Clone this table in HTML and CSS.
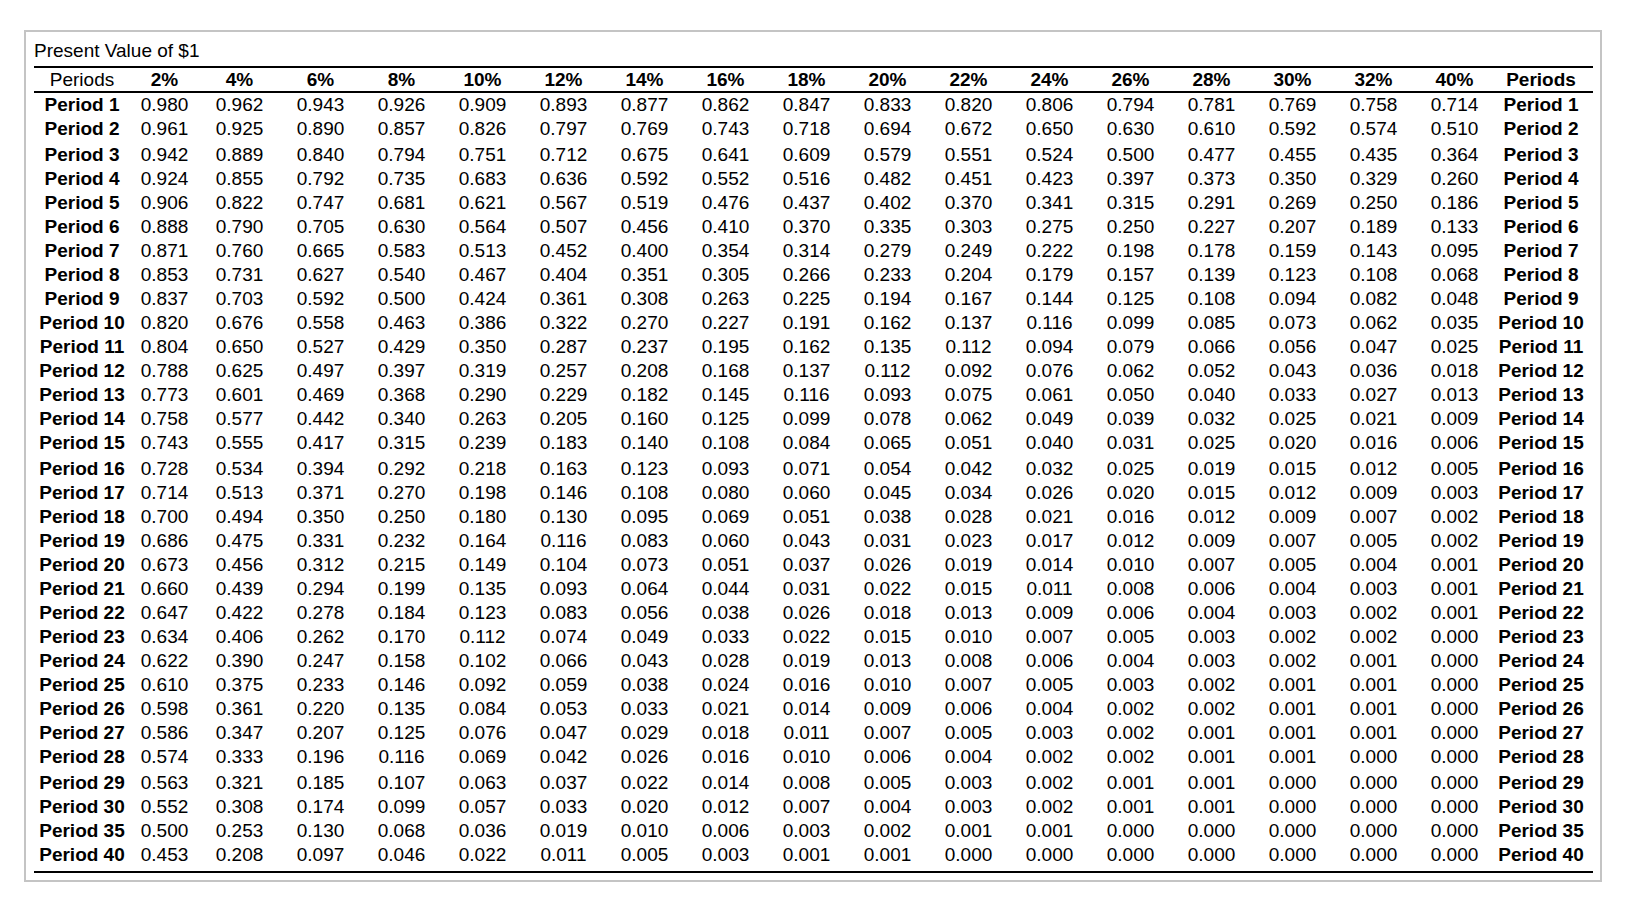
FILE: index.html
```html
<!DOCTYPE html>
<html lang="en">
<head>
<meta charset="utf-8">
<title>Present Value of $1</title>
<link rel="stylesheet" href="styles.css">
</head>
<body>
<div class="frame">
  <div class="title">Present Value of $1</div>
  <div class="table-wrap">
    <table class="pv">
      <colgroup>
        <col class="c-label-l">
        <col class="c-first">
        <col class="c-num"><col class="c-num"><col class="c-num"><col class="c-num">
        <col class="c-num"><col class="c-num"><col class="c-num"><col class="c-num">
        <col class="c-num"><col class="c-num"><col class="c-num"><col class="c-num">
        <col class="c-num"><col class="c-num"><col class="c-num"><col class="c-num">
        <col class="c-label-r">
      </colgroup>
      <thead>
        <tr>
          <th class="plain">Periods</th>
          <th>2%</th><th>4%</th><th>6%</th><th>8%</th><th>10%</th><th>12%</th><th>14%</th><th>16%</th><th>18%</th><th>20%</th><th>22%</th><th>24%</th><th>26%</th><th>28%</th><th>30%</th><th>32%</th><th>40%</th>
          <th class="end">Periods</th>
        </tr>
      </thead>
      <tbody>
        <tr><th>Period 1</th><td>0.980</td><td>0.962</td><td>0.943</td><td>0.926</td><td>0.909</td><td>0.893</td><td>0.877</td><td>0.862</td><td>0.847</td><td>0.833</td><td>0.820</td><td>0.806</td><td>0.794</td><td>0.781</td><td>0.769</td><td>0.758</td><td>0.714</td><th class="end">Period 1</th></tr>
        <tr><th>Period 2</th><td>0.961</td><td>0.925</td><td>0.890</td><td>0.857</td><td>0.826</td><td>0.797</td><td>0.769</td><td>0.743</td><td>0.718</td><td>0.694</td><td>0.672</td><td>0.650</td><td>0.630</td><td>0.610</td><td>0.592</td><td>0.574</td><td>0.510</td><th class="end">Period 2</th></tr>
        <tr class="gap"><th>Period 3</th><td>0.942</td><td>0.889</td><td>0.840</td><td>0.794</td><td>0.751</td><td>0.712</td><td>0.675</td><td>0.641</td><td>0.609</td><td>0.579</td><td>0.551</td><td>0.524</td><td>0.500</td><td>0.477</td><td>0.455</td><td>0.435</td><td>0.364</td><th class="end">Period 3</th></tr>
        <tr><th>Period 4</th><td>0.924</td><td>0.855</td><td>0.792</td><td>0.735</td><td>0.683</td><td>0.636</td><td>0.592</td><td>0.552</td><td>0.516</td><td>0.482</td><td>0.451</td><td>0.423</td><td>0.397</td><td>0.373</td><td>0.350</td><td>0.329</td><td>0.260</td><th class="end">Period 4</th></tr>
        <tr><th>Period 5</th><td>0.906</td><td>0.822</td><td>0.747</td><td>0.681</td><td>0.621</td><td>0.567</td><td>0.519</td><td>0.476</td><td>0.437</td><td>0.402</td><td>0.370</td><td>0.341</td><td>0.315</td><td>0.291</td><td>0.269</td><td>0.250</td><td>0.186</td><th class="end">Period 5</th></tr>
        <tr><th>Period 6</th><td>0.888</td><td>0.790</td><td>0.705</td><td>0.630</td><td>0.564</td><td>0.507</td><td>0.456</td><td>0.410</td><td>0.370</td><td>0.335</td><td>0.303</td><td>0.275</td><td>0.250</td><td>0.227</td><td>0.207</td><td>0.189</td><td>0.133</td><th class="end">Period 6</th></tr>
        <tr><th>Period 7</th><td>0.871</td><td>0.760</td><td>0.665</td><td>0.583</td><td>0.513</td><td>0.452</td><td>0.400</td><td>0.354</td><td>0.314</td><td>0.279</td><td>0.249</td><td>0.222</td><td>0.198</td><td>0.178</td><td>0.159</td><td>0.143</td><td>0.095</td><th class="end">Period 7</th></tr>
        <tr><th>Period 8</th><td>0.853</td><td>0.731</td><td>0.627</td><td>0.540</td><td>0.467</td><td>0.404</td><td>0.351</td><td>0.305</td><td>0.266</td><td>0.233</td><td>0.204</td><td>0.179</td><td>0.157</td><td>0.139</td><td>0.123</td><td>0.108</td><td>0.068</td><th class="end">Period 8</th></tr>
        <tr><th>Period 9</th><td>0.837</td><td>0.703</td><td>0.592</td><td>0.500</td><td>0.424</td><td>0.361</td><td>0.308</td><td>0.263</td><td>0.225</td><td>0.194</td><td>0.167</td><td>0.144</td><td>0.125</td><td>0.108</td><td>0.094</td><td>0.082</td><td>0.048</td><th class="end">Period 9</th></tr>
        <tr><th>Period 10</th><td>0.820</td><td>0.676</td><td>0.558</td><td>0.463</td><td>0.386</td><td>0.322</td><td>0.270</td><td>0.227</td><td>0.191</td><td>0.162</td><td>0.137</td><td>0.116</td><td>0.099</td><td>0.085</td><td>0.073</td><td>0.062</td><td>0.035</td><th class="end">Period 10</th></tr>
        <tr><th>Period 11</th><td>0.804</td><td>0.650</td><td>0.527</td><td>0.429</td><td>0.350</td><td>0.287</td><td>0.237</td><td>0.195</td><td>0.162</td><td>0.135</td><td>0.112</td><td>0.094</td><td>0.079</td><td>0.066</td><td>0.056</td><td>0.047</td><td>0.025</td><th class="end">Period 11</th></tr>
        <tr><th>Period 12</th><td>0.788</td><td>0.625</td><td>0.497</td><td>0.397</td><td>0.319</td><td>0.257</td><td>0.208</td><td>0.168</td><td>0.137</td><td>0.112</td><td>0.092</td><td>0.076</td><td>0.062</td><td>0.052</td><td>0.043</td><td>0.036</td><td>0.018</td><th class="end">Period 12</th></tr>
        <tr><th>Period 13</th><td>0.773</td><td>0.601</td><td>0.469</td><td>0.368</td><td>0.290</td><td>0.229</td><td>0.182</td><td>0.145</td><td>0.116</td><td>0.093</td><td>0.075</td><td>0.061</td><td>0.050</td><td>0.040</td><td>0.033</td><td>0.027</td><td>0.013</td><th class="end">Period 13</th></tr>
        <tr><th>Period 14</th><td>0.758</td><td>0.577</td><td>0.442</td><td>0.340</td><td>0.263</td><td>0.205</td><td>0.160</td><td>0.125</td><td>0.099</td><td>0.078</td><td>0.062</td><td>0.049</td><td>0.039</td><td>0.032</td><td>0.025</td><td>0.021</td><td>0.009</td><th class="end">Period 14</th></tr>
        <tr><th>Period 15</th><td>0.743</td><td>0.555</td><td>0.417</td><td>0.315</td><td>0.239</td><td>0.183</td><td>0.140</td><td>0.108</td><td>0.084</td><td>0.065</td><td>0.051</td><td>0.040</td><td>0.031</td><td>0.025</td><td>0.020</td><td>0.016</td><td>0.006</td><th class="end">Period 15</th></tr>
        <tr class="gap"><th>Period 16</th><td>0.728</td><td>0.534</td><td>0.394</td><td>0.292</td><td>0.218</td><td>0.163</td><td>0.123</td><td>0.093</td><td>0.071</td><td>0.054</td><td>0.042</td><td>0.032</td><td>0.025</td><td>0.019</td><td>0.015</td><td>0.012</td><td>0.005</td><th class="end">Period 16</th></tr>
        <tr><th>Period 17</th><td>0.714</td><td>0.513</td><td>0.371</td><td>0.270</td><td>0.198</td><td>0.146</td><td>0.108</td><td>0.080</td><td>0.060</td><td>0.045</td><td>0.034</td><td>0.026</td><td>0.020</td><td>0.015</td><td>0.012</td><td>0.009</td><td>0.003</td><th class="end">Period 17</th></tr>
        <tr><th>Period 18</th><td>0.700</td><td>0.494</td><td>0.350</td><td>0.250</td><td>0.180</td><td>0.130</td><td>0.095</td><td>0.069</td><td>0.051</td><td>0.038</td><td>0.028</td><td>0.021</td><td>0.016</td><td>0.012</td><td>0.009</td><td>0.007</td><td>0.002</td><th class="end">Period 18</th></tr>
        <tr><th>Period 19</th><td>0.686</td><td>0.475</td><td>0.331</td><td>0.232</td><td>0.164</td><td>0.116</td><td>0.083</td><td>0.060</td><td>0.043</td><td>0.031</td><td>0.023</td><td>0.017</td><td>0.012</td><td>0.009</td><td>0.007</td><td>0.005</td><td>0.002</td><th class="end">Period 19</th></tr>
        <tr><th>Period 20</th><td>0.673</td><td>0.456</td><td>0.312</td><td>0.215</td><td>0.149</td><td>0.104</td><td>0.073</td><td>0.051</td><td>0.037</td><td>0.026</td><td>0.019</td><td>0.014</td><td>0.010</td><td>0.007</td><td>0.005</td><td>0.004</td><td>0.001</td><th class="end">Period 20</th></tr>
        <tr><th>Period 21</th><td>0.660</td><td>0.439</td><td>0.294</td><td>0.199</td><td>0.135</td><td>0.093</td><td>0.064</td><td>0.044</td><td>0.031</td><td>0.022</td><td>0.015</td><td>0.011</td><td>0.008</td><td>0.006</td><td>0.004</td><td>0.003</td><td>0.001</td><th class="end">Period 21</th></tr>
        <tr><th>Period 22</th><td>0.647</td><td>0.422</td><td>0.278</td><td>0.184</td><td>0.123</td><td>0.083</td><td>0.056</td><td>0.038</td><td>0.026</td><td>0.018</td><td>0.013</td><td>0.009</td><td>0.006</td><td>0.004</td><td>0.003</td><td>0.002</td><td>0.001</td><th class="end">Period 22</th></tr>
        <tr><th>Period 23</th><td>0.634</td><td>0.406</td><td>0.262</td><td>0.170</td><td>0.112</td><td>0.074</td><td>0.049</td><td>0.033</td><td>0.022</td><td>0.015</td><td>0.010</td><td>0.007</td><td>0.005</td><td>0.003</td><td>0.002</td><td>0.002</td><td>0.000</td><th class="end">Period 23</th></tr>
        <tr><th>Period 24</th><td>0.622</td><td>0.390</td><td>0.247</td><td>0.158</td><td>0.102</td><td>0.066</td><td>0.043</td><td>0.028</td><td>0.019</td><td>0.013</td><td>0.008</td><td>0.006</td><td>0.004</td><td>0.003</td><td>0.002</td><td>0.001</td><td>0.000</td><th class="end">Period 24</th></tr>
        <tr><th>Period 25</th><td>0.610</td><td>0.375</td><td>0.233</td><td>0.146</td><td>0.092</td><td>0.059</td><td>0.038</td><td>0.024</td><td>0.016</td><td>0.010</td><td>0.007</td><td>0.005</td><td>0.003</td><td>0.002</td><td>0.001</td><td>0.001</td><td>0.000</td><th class="end">Period 25</th></tr>
        <tr><th>Period 26</th><td>0.598</td><td>0.361</td><td>0.220</td><td>0.135</td><td>0.084</td><td>0.053</td><td>0.033</td><td>0.021</td><td>0.014</td><td>0.009</td><td>0.006</td><td>0.004</td><td>0.002</td><td>0.002</td><td>0.001</td><td>0.001</td><td>0.000</td><th class="end">Period 26</th></tr>
        <tr><th>Period 27</th><td>0.586</td><td>0.347</td><td>0.207</td><td>0.125</td><td>0.076</td><td>0.047</td><td>0.029</td><td>0.018</td><td>0.011</td><td>0.007</td><td>0.005</td><td>0.003</td><td>0.002</td><td>0.001</td><td>0.001</td><td>0.001</td><td>0.000</td><th class="end">Period 27</th></tr>
        <tr><th>Period 28</th><td>0.574</td><td>0.333</td><td>0.196</td><td>0.116</td><td>0.069</td><td>0.042</td><td>0.026</td><td>0.016</td><td>0.010</td><td>0.006</td><td>0.004</td><td>0.002</td><td>0.002</td><td>0.001</td><td>0.001</td><td>0.000</td><td>0.000</td><th class="end">Period 28</th></tr>
        <tr class="gap"><th>Period 29</th><td>0.563</td><td>0.321</td><td>0.185</td><td>0.107</td><td>0.063</td><td>0.037</td><td>0.022</td><td>0.014</td><td>0.008</td><td>0.005</td><td>0.003</td><td>0.002</td><td>0.001</td><td>0.001</td><td>0.000</td><td>0.000</td><td>0.000</td><th class="end">Period 29</th></tr>
        <tr><th>Period 30</th><td>0.552</td><td>0.308</td><td>0.174</td><td>0.099</td><td>0.057</td><td>0.033</td><td>0.020</td><td>0.012</td><td>0.007</td><td>0.004</td><td>0.003</td><td>0.002</td><td>0.001</td><td>0.001</td><td>0.000</td><td>0.000</td><td>0.000</td><th class="end">Period 30</th></tr>
        <tr><th>Period 35</th><td>0.500</td><td>0.253</td><td>0.130</td><td>0.068</td><td>0.036</td><td>0.019</td><td>0.010</td><td>0.006</td><td>0.003</td><td>0.002</td><td>0.001</td><td>0.001</td><td>0.000</td><td>0.000</td><td>0.000</td><td>0.000</td><td>0.000</td><th class="end">Period 35</th></tr>
        <tr><th>Period 40</th><td>0.453</td><td>0.208</td><td>0.097</td><td>0.046</td><td>0.022</td><td>0.011</td><td>0.005</td><td>0.003</td><td>0.001</td><td>0.001</td><td>0.000</td><td>0.000</td><td>0.000</td><td>0.000</td><td>0.000</td><td>0.000</td><td>0.000</td><th class="end">Period 40</th></tr>
      </tbody>
    </table>
  </div>
</div>
</body>
</html>
```

FILE: styles.css
```css
html, body {
  margin: 0;
  padding: 0;
  background: #ffffff;
}

body {
  font-family: "Liberation Sans", Arial, sans-serif;
  font-size: 19px;
  color: #000000;
}

.frame {
  box-sizing: border-box;
  width: 1578px;
  margin: 30px 0 0 24px;
  padding: 8px 7px 7px 8px;
  border: 2px solid #c4c4c4;
}

.title {
  line-height: 22px;
  height: 22px;
  margin-bottom: 4px;
  white-space: nowrap;
}

.table-wrap {
  width: 1559px;
  border-top: 2px solid #000000;
  border-bottom: 2px solid #000000;
  padding-bottom: 4px;
}

.pv {
  width: 1559px;
  table-layout: fixed;
  border-collapse: separate;
  border-spacing: 0;
}

.c-label-l { width: 96px; }
.c-first { width: 69px; }
.c-num { width: 81px; }
.c-label-r { width: 98px; }

.pv th,
.pv td {
  padding: 0;
  text-align: center;
  white-space: nowrap;
  vertical-align: middle;
}

.pv th.end {
  padding-right: 6px;
}

.pv thead th {
  line-height: 23px;
  font-weight: bold;
  border-bottom: 2px solid #000000;
}

.pv thead th.plain {
  font-weight: normal;
}

.pv tbody th,
.pv tbody td {
  line-height: 24px;
}

.pv tbody tr.gap th,
.pv tbody tr.gap td {
  padding-top: 2px;
}

.pv tbody th {
  font-weight: bold;
}

.pv tbody td {
  font-weight: normal;
}
```
